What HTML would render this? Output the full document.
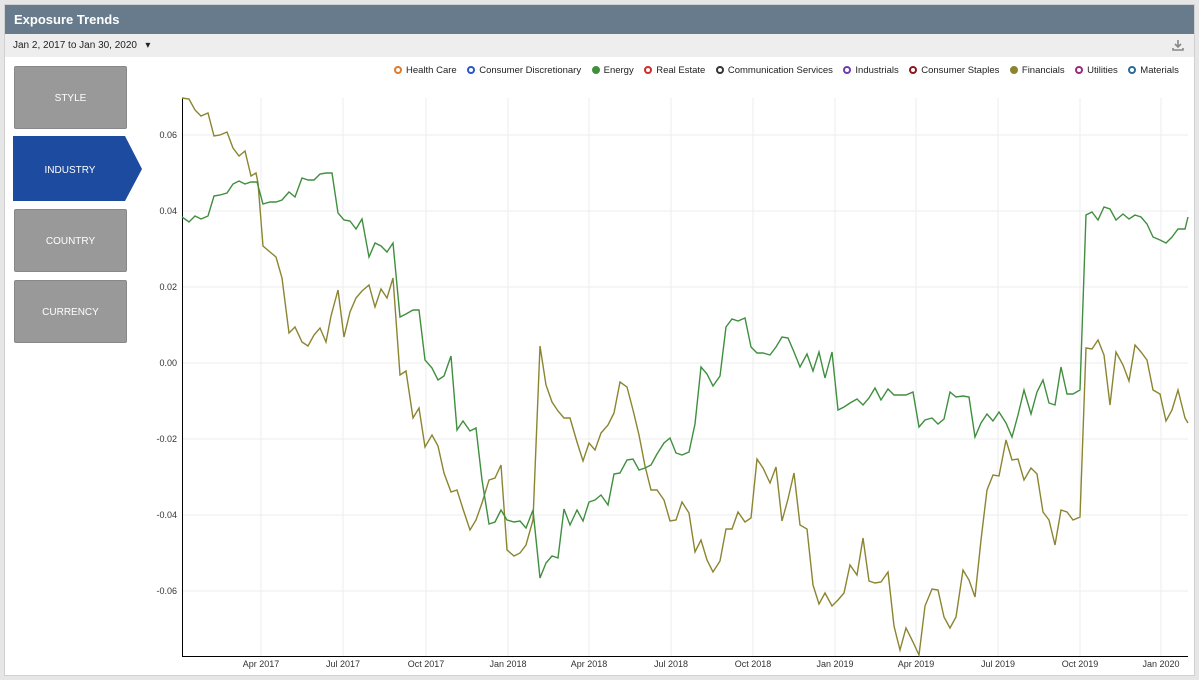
<!DOCTYPE html>
<html><head><meta charset="utf-8"><style>
*{margin:0;padding:0;box-sizing:border-box}
body{width:1199px;height:680px;background:#e6e6e6;font-family:"Liberation Sans",sans-serif;position:relative;overflow:hidden}
.panel{position:absolute;left:4px;top:4px;width:1191px;height:672px;background:#fff;border:1px solid #d0d0d0}
.hdr{position:absolute;left:0;top:0;width:100%;height:29px;background:#687b8c;color:#fff;font-weight:bold;font-size:13px;line-height:29px;padding-left:9px}
.sub{position:absolute;left:0;top:29px;width:100%;height:23px;background:#eeeeee;font-size:10px;color:#222;line-height:23px;padding-left:8px}
.btn{position:absolute;left:9px;width:113px;height:63px;background:#999;border:1px solid #888;border-radius:2px;color:#fff;font-size:10px;text-align:center;line-height:63px}
.leg{position:absolute;top:65px;left:394px;font-size:9.5px;color:#222;white-space:nowrap}
.leg span{margin-right:10.5px}
.leg i{display:inline-block;width:8px;height:8px;border-radius:50%;border:2px solid;margin-right:4px;vertical-align:-1px}
</style></head><body>
<div class="panel">
<div class="hdr">Exposure Trends</div>
<div class="sub">Jan 2, 2017 to Jan 30, 2020 &nbsp;&nbsp;▾
<svg style="position:absolute;right:10px;top:5px" width="12" height="12" viewBox="0 0 12 12"><path d="M6 1v6M3 5l3 3 3-3M1 9v2h10V9" stroke="#888" stroke-width="1.6" fill="none"/></svg></div>
<div class="btn" style="top:61px">STYLE</div>
<div class="btn" style="top:204px">COUNTRY</div>
<div class="btn" style="top:275px">CURRENCY</div>
</div>
<svg style="position:absolute;left:13px;top:136px" width="130" height="66"><polygon points="0,0 112,0 129,33 112,65 0,65" fill="#1d4b9f"/><text x="57" y="37" fill="#fff" font-size="10" text-anchor="middle" font-family="Liberation Sans">INDUSTRY</text></svg>
<div class="leg">
<span><i style="border-color:#e07b2a"></i>Health Care</span><span><i style="border-color:#2a56c6"></i>Consumer Discretionary</span><span><i style="border-color:#3f8f3f;background:#3f8f3f"></i>Energy</span><span><i style="border-color:#d42a2a"></i>Real Estate</span><span><i style="border-color:#333"></i>Communication Services</span><span><i style="border-color:#6a3fb0"></i>Industrials</span><span><i style="border-color:#8a1a1a"></i>Consumer Staples</span><span><i style="border-color:#8b8530;background:#8b8530"></i>Financials</span><span><i style="border-color:#9a2a7a"></i>Utilities</span><span><i style="border-color:#2a6a9a"></i>Materials</span>
</div>
<svg style="position:absolute;left:0;top:0" width="1199" height="680" font-family="Liberation Sans" font-size="9">
<g stroke="#eee" stroke-width="1">
<line x1="182" x2="1188" y1="135" y2="135"/><line x1="182" x2="1188" y1="211" y2="211"/><line x1="182" x2="1188" y1="287" y2="287"/><line x1="182" x2="1188" y1="363" y2="363"/><line x1="182" x2="1188" y1="439" y2="439"/><line x1="182" x2="1188" y1="515" y2="515"/><line x1="182" x2="1188" y1="591" y2="591"/>
<line x1="261" x2="261" y1="98" y2="656"/><line x1="343" x2="343" y1="98" y2="656"/><line x1="426" x2="426" y1="98" y2="656"/><line x1="508" x2="508" y1="98" y2="656"/><line x1="589" x2="589" y1="98" y2="656"/><line x1="671" x2="671" y1="98" y2="656"/><line x1="753" x2="753" y1="98" y2="656"/><line x1="835" x2="835" y1="98" y2="656"/><line x1="916" x2="916" y1="98" y2="656"/><line x1="998" x2="998" y1="98" y2="656"/><line x1="1080" x2="1080" y1="98" y2="656"/><line x1="1161" x2="1161" y1="98" y2="656"/>
</g>
<line x1="182.5" x2="182.5" y1="98" y2="656" stroke="#000"/><line x1="182" x2="1188" y1="656.5" y2="656.5" stroke="#000"/>
<g fill="#333" text-anchor="end"><text x="177" y="138">0.06</text><text x="177" y="214">0.04</text><text x="177" y="290">0.02</text><text x="177" y="366">0.00</text><text x="177" y="442">-0.02</text><text x="177" y="518">-0.04</text><text x="177" y="594">-0.06</text></g>
<g fill="#333" text-anchor="middle"><text x="261" y="667">Apr 2017</text><text x="343" y="667">Jul 2017</text><text x="426" y="667">Oct 2017</text><text x="508" y="667">Jan 2018</text><text x="589" y="667">Apr 2018</text><text x="671" y="667">Jul 2018</text><text x="753" y="667">Oct 2018</text><text x="835" y="667">Jan 2019</text><text x="916" y="667">Apr 2019</text><text x="998" y="667">Jul 2019</text><text x="1080" y="667">Oct 2019</text><text x="1161" y="667">Jan 2020</text></g>
<polyline fill="none" stroke="#8b8530" stroke-width="1.4" points="182,98 189,99 195,110 201,116 208,113 214,136 220,135 227,132 233,148 239,156 245,151 251,176 256,173 258,183 263,246 270,252 276,257 282,278 289,333 295,327 302,342 308,346 314,335 320,328 326,342 331,316 338,290 344,337 350,312 356,298 362,291 369,285 375,307 381,289 387,298 393,278 400,375 406,371 413,418 419,408 425,447 432,435 438,446 444,473 451,492 457,490 463,509 470,530 476,520 482,503 489,480 495,478 501,465 507,550 514,556 520,553 526,545 533,520 540,346 546,385 552,402 558,411 564,418 570,418 577,442 583,461 589,443 595,450 601,433 608,425 614,413 620,382 627,387 633,410 639,435 645,466 651,490 657,490 664,500 670,521 676,520 682,502 689,513 695,552 701,540 707,560 713,572 720,561 726,529 732,529 738,512 745,522 751,518 757,459 763,468 770,483 776,467 782,521 788,499 794,473 800,525 807,529 813,585 819,604 825,593 832,606 838,600 844,593 850,565 857,575 863,538 869,581 875,583 881,582 888,572 894,626 900,650 906,628 913,642 919,655 925,606 932,589 938,590 944,617 950,628 956,617 963,570 969,580 975,597 981,540 987,490 993,475 999,476 1006,440 1012,460 1018,459 1024,480 1031,468 1037,474 1043,512 1049,520 1055,545 1061,510 1067,512 1073,520 1080,517 1086,348 1092,349 1098,340 1104,355 1110,405 1116,352 1123,365 1129,381 1135,345 1141,352 1147,360 1153,390 1160,394 1166,421 1172,410 1178,390 1185,418 1188,423"/>
<polyline fill="none" stroke="#3f8f3f" stroke-width="1.4" points="182,217 189,222 195,216 201,219 208,216 214,196 220,195 227,193 233,184 239,181 245,184 251,182 257,182 263,204 270,202 276,202 282,200 289,192 295,197 302,178 308,180 314,180 320,174 326,173 332,173 338,213 344,220 350,221 356,229 362,219 369,257 375,243 381,246 387,252 393,243 400,317 406,314 413,310 419,310 425,360 432,368 438,380 444,376 451,356 457,430 463,421 470,431 476,428 482,480 489,524 495,522 501,510 507,520 514,522 520,521 526,528 533,510 540,578 546,563 552,556 558,558 564,509 570,525 577,510 583,521 589,502 595,500 601,495 608,505 614,474 620,473 627,460 633,459 639,470 645,468 651,465 657,454 664,443 670,438 676,453 682,455 689,452 695,424 701,367 707,374 713,386 720,376 726,327 732,319 738,321 745,318 751,347 757,353 763,353 770,355 776,347 782,337 788,338 794,352 800,367 807,354 813,371 819,352 825,378 832,352 838,410 844,407 850,403 857,399 863,405 869,398 875,388 881,400 888,389 894,395 900,395 906,395 913,392 919,427 925,420 932,418 938,424 944,419 950,392 956,397 963,396 969,397 975,437 981,423 987,414 993,421 999,412 1006,423 1012,437 1018,415 1024,390 1031,414 1037,392 1043,380 1049,403 1055,405 1061,367 1067,394 1073,394 1080,390 1086,215 1092,212 1098,220 1104,207 1110,209 1116,220 1123,214 1129,219 1135,215 1141,217 1147,224 1153,237 1160,240 1166,243 1172,237 1178,229 1185,229 1188,217"/>
</svg>
</body></html>
